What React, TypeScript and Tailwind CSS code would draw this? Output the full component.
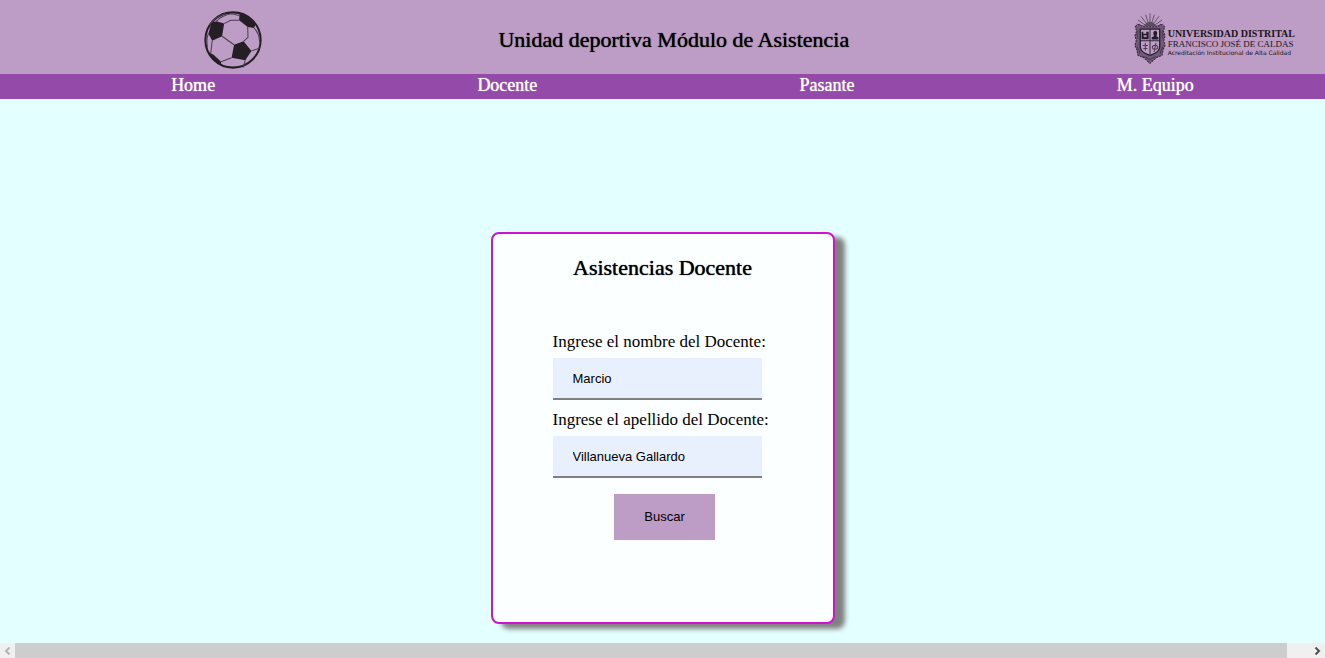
import React from 'react';

const navItems = ['Home', 'Docente', 'Pasante', 'M. Equipo'];

function BallLogo() {
  return (
    <svg viewBox="44 35 170 170" className="size-[58px] shrink-0" role="img" aria-label="Balón">
      <circle cx="129" cy="120" r="81" fill="none" stroke="#231f24" strokeWidth="6" />
      <g fill="#231f24">
        <path d="M66 69 L80 65 L103 72 L97 109 L68 122 L57 101 Z" />
        <path d="M148 41 Q176 47 195 73 L191 85 L172 82 L147 62 Z" />
        <path d="M132 134 L160 124 L183 152 L165 179 L125 172 Z" />
        <path d="M58 156 L72 163 L94 184 L94 194 Q70 182 58 156 Z" />
      </g>
      <g fill="none" stroke="#4b3f50" strokeWidth="3">
        <path d="M103 72 L122 62 L147 62" />
        <path d="M172 82 L173 112 L160 124" />
        <path d="M97 109 L132 134" />
        <path d="M68 122 L64 158" />
        <path d="M125 172 L94 184" />
        <path d="M165 179 L159 200" />
        <path d="M183 152 L206 144" />
        <path d="M191 85 Q206 100 207 126" />
        <path d="M80 65 Q96 48 124 43 L148 48" />
        <path d="M57 101 Q50 118 54 140" />
        <path d="M60 76 Q80 50 106 43" />
      </g>
    </svg>
  );
}

function Crest() {
  return (
    <svg viewBox="35 20 94 152" className="h-[51px] w-8 shrink-0" aria-hidden="true">
      <g stroke="#3d3042" strokeWidth="2" fill="none">
        <path d="M82 50 V21 M77 50 L69 25 M87 50 L95 25 M72 52 L55 30 M92 52 L109 30 M68 56 L46 41 M96 56 L118 41 M66 60 L42 53 M98 60 L122 53" />
      </g>
      <path d="M64 60 Q68 47 82 46 Q96 47 100 60 Z" fill="#5d4b64" />
      <path
        d="M38 60 L50 54 L60 61 L104 61 L114 54 L126 60 L122 74 L127 88 L123 102 L127 116 L121 130 L118 146 L101 153 L82 170 L63 153 L46 146 L43 130 L37 116 L41 102 L37 88 L42 74 Z"
        fill="#725b7a"
        stroke="#30263a"
        strokeWidth="3"
        strokeDasharray="6 3"
      />
      <path d="M53 68 H111 V122 Q109 138 82 146 Q55 138 53 122 Z" fill="#bd9cc5" stroke="#241c2b" strokeWidth="4" />
      <path d="M82 68 V144 M53 103 H111" stroke="#30263a" strokeWidth="3" />
      <path d="M57 76 H62 V82 H71 V76 H78 V98 H57 Z" fill="#241c2b" />
      <path d="M63 86 H72 V92 H63 Z" fill="#a78bb0" />
      <path d="M87 99 V92 L94 89 Q88 74 98 73 Q107 74 101 89 L107 92 V99 Z" fill="#241c2b" />
      <g fill="none" stroke="#4b3c52" strokeWidth="3">
        <path d="M60 117 H76 M68 109 V132 M62 126 H74" />
        <ellipse cx="97" cy="122" rx="8" ry="6" />
        <path d="M100 109 L94 136" />
        <path d="M43 72 Q50 78 42 84 Q50 90 42 97 M121 72 Q114 78 122 84 Q114 90 122 97 M43 120 Q52 132 51 142 M121 120 Q112 132 113 142" />
        <path d="M58 151 Q70 149 82 160 Q94 149 106 151" />
      </g>
    </svg>
  );
}

function UniversityLogo() {
  return (
    <div className="ml-12 flex shrink-0 items-start gap-0.5 pb-1 text-[#1c1620]">
      <Crest />
      <div className="pt-[15px] whitespace-nowrap">
        <p className="text-[10px] leading-[11px] font-bold">UNIVERSIDAD DISTRITAL</p>
        <p className="text-[9px] leading-[10px]">FRANCISCO JOSÉ DE CALDAS</p>
        <p className="font-['DejaVu_Sans',sans-serif] text-[6px] leading-[7px]">
          Acreditación Institucional de Alta Calidad
        </p>
      </div>
    </div>
  );
}

function Field({ id, label, value }: { id: string; label: string; value: string }) {
  return (
    <div className="mb-2">
      <label htmlFor={id} className="block pt-0.5 pb-1.5 text-[17px] leading-5 whitespace-nowrap">
        {label}
      </label>
      <input
        id={id}
        type="text"
        defaultValue={value}
        className="block h-[42px] w-[209px] border-b-2 border-[#808080] bg-[#e8f0fe] px-5 font-['Liberation_Sans',sans-serif] text-[13px] outline-none"
      />
    </div>
  );
}

function ScrollBar() {
  return (
    <div className="flex h-[15px] bg-[#f0f0f0]">
      <button type="button" aria-label="Desplazar a la izquierda" className="flex w-[15px] items-center justify-center">
        <svg viewBox="0 0 7 8" className="h-2 w-[7px]">
          <path d="M5.5 0.5 L2 4 L5.5 7.5" fill="none" stroke="#b4b4b4" strokeWidth="2" />
        </svg>
      </button>
      <div className="flex-1 bg-[#cdcdcd]" />
      <div className="w-[23px]" />
      <button type="button" aria-label="Desplazar a la derecha" className="flex w-[15px] items-center justify-center">
        <svg viewBox="0 0 7 8" className="h-2 w-[7px]">
          <path d="M1.5 0.5 L5 4 L1.5 7.5" fill="none" stroke="#505050" strokeWidth="2" />
        </svg>
      </button>
    </div>
  );
}

export default function App() {
  return (
    <div className="flex min-h-screen flex-col bg-[#e3ffff] font-['Liberation_Serif',serif] text-black">
      <header className="flex h-[74px] items-center justify-between bg-[#bd9cc5] pt-1.5 pr-[30px] pl-[204px]">
        <BallLogo />
        <h1 className="text-[22px] leading-7 whitespace-nowrap [text-shadow:0_0_1px_black]">
          Unidad deportiva Módulo de Asistencia
        </h1>
        <UniversityLogo />
      </header>
      <nav className="bg-[#944aa8] pl-10">
        <ul className="flex h-[25px] justify-around text-lg leading-[22px] text-white">
          {navItems.map((item) => (
            <li key={item}>
              <a href="#" className="[text-shadow:0_0_1px_white]">
                {item}
              </a>
            </li>
          ))}
        </ul>
      </nav>
      <main className="flex flex-1 items-start justify-center pt-[133px] pb-[19px]">
        <section className="flex min-h-[392px] w-[344px] flex-col items-center rounded-lg border-2 border-[#d011d0] bg-[#fcffff] pt-5 shadow-[10px_5px_5px_gray]">
          <h2 className="text-[22px] leading-7 [text-shadow:0_0_1px_black]">Asistencias Docente</h2>
          <form className="w-[220px] pt-12" onSubmit={(e) => e.preventDefault()}>
            <Field id="nombre" label="Ingrese el nombre del Docente:" value="Marcio" />
            <Field id="apellido" label="Ingrese el apellido del Docente:" value="Villanueva Gallardo" />
            <div className="flex justify-center pt-2 pl-1">
              <button
                type="submit"
                className="h-[46px] bg-[#bd9cc5] px-[30px] font-['Liberation_Sans',sans-serif] text-[13px]"
              >
                Buscar
              </button>
            </div>
          </form>
        </section>
      </main>
      <ScrollBar />
    </div>
  );
}
